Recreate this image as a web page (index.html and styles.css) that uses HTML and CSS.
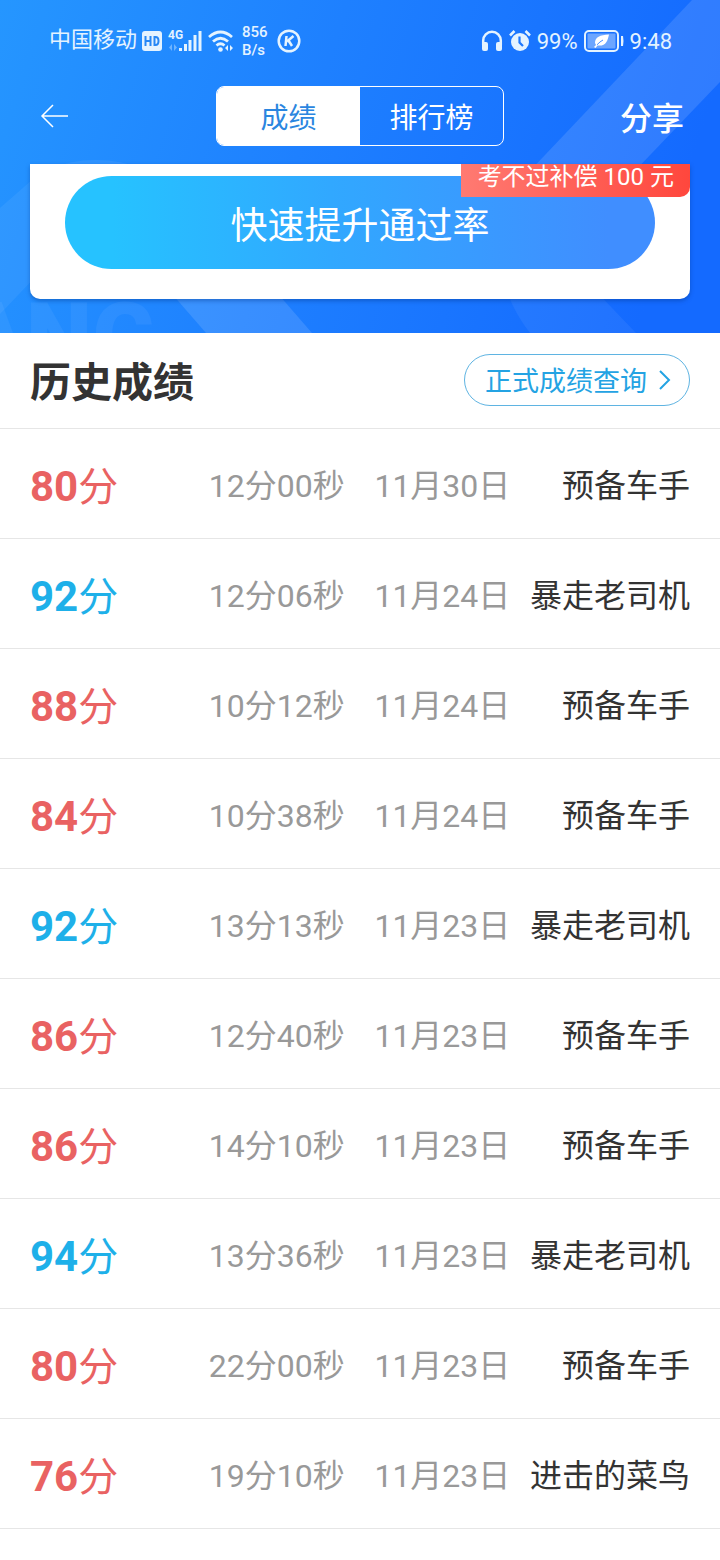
FILE: index.html
```html
<!DOCTYPE html>
<html lang="zh-CN">
<head>
<meta charset="utf-8">
<meta name="viewport" content="width=device-width, initial-scale=1">
<title>历史成绩</title>
<link rel="stylesheet" href="styles.css">
</head>
<body>
<header class="hero">
  <svg class="hero-art" viewBox="0 0 720 333" preserveAspectRatio="none" aria-hidden="true">
    <g fill="#fff">
      <path d="M692 0H720V82L540 270H436Z" opacity=".12"/>
      <path d="M0 208L40 173V272L0 314Z" opacity=".06"/>
      <ellipse cx="96" cy="190" rx="64" ry="30" opacity=".06"/>
      <path d="M146 264H252L312 333H206Z" opacity=".12"/>
      <path d="M505 285Q512 310 530 333H636L590 285Z" opacity=".06"/>
      <text class="hero-mark" x="-38" y="370" opacity=".05">ANG</text>
    </g>
  </svg>

  <div class="status">
    <div class="status-side">
      <span class="carrier">中国移动</span>
      <svg width="20" height="20" viewBox="0 0 20 20"><rect width="20" height="20" rx="3" fill="#e4f3ff"/><path d="M3.500 5v10M8.500 5v10M3.500 10h5M12.500 6v8h1c2 0 3-1.500 3-4s-1-4-3-4z" fill="none" stroke="#2687f5" stroke-width="2"/></svg>
      <span class="signal">
        <span class="net">4G</span>
        <svg width="34" height="24" viewBox="0 0 34 24" fill="#e4f3ff"><path d="M11 19h3v3h-3zM16 15h3v7h-3zM20.500 11h3v11h-3zM25.500 6h3v16h-3zM30.500 2h3v20h-3z"/><path d="M4 15v7L1 18.500zM6 22v-7l3 3.500z" opacity=".4"/></svg>
      </span>
      <svg width="26" height="24" viewBox="0 0 26 24"><g fill="none" stroke="#e4f3ff" stroke-width="2.800"><path d="M1 8Q12.500-2 24 8M5 12.500Q12.500 6 20 12.500M8.500 16.500Q12.500 13 16.500 16.500"/></g><g fill="#e4f3ff"><circle cx="12.500" cy="20.500" r="2.300"/><path d="M20 16v6l-3-3zM22 16v6l3-3z"/></g></svg>
      <span class="speed">856<br>B/s</span>
      <svg width="24" height="24" viewBox="0 0 24 24" fill="none" stroke="#e4f3ff" stroke-width="2.500"><circle cx="12" cy="12" r="10.300"/><path d="M9.500 7L8.500 17M16.500 7L10 12.500M11.500 11.500L15 17"/></svg>
    </div>
    <div class="status-side">
      <svg width="22" height="24" viewBox="0 0 22 24"><path d="M2.200 16V11.500a8.800 8.800 0 0 1 17.600 0V16" fill="none" stroke="#e4f3ff" stroke-width="2.500"/><g fill="#e4f3ff"><rect x="1" y="13" width="6" height="9" rx="2"/><rect x="15" y="13" width="6" height="9" rx="2"/></g></svg>
      <svg width="22" height="24" viewBox="0 0 22 24"><circle cx="11" cy="13" r="9" fill="#e4f3ff"/><path d="M1 6.500L5.500 2M21 6.500L16.500 2" stroke="#e4f3ff" stroke-width="2.500"/><path d="M10.500 7.500V13.500L14 17" fill="none" stroke="#1d78fd" stroke-width="2.200"/></svg>
      <span>99%</span>
      <svg width="40" height="22" viewBox="0 0 40 22"><rect x="1" y="1" width="33" height="20" rx="4" fill="none" stroke="#e4f3ff" stroke-width="2"/><rect x="3.500" y="3.500" width="28" height="15" rx="1" fill="#6ca6ff"/><path d="M37 6h2q1 5 0 10h-2z" fill="#e4f3ff"/><path d="M25 4.500C16 5 11 7 11 13l1 2-2 2 1.500 1 2-2.500C22 16.500 23.500 11 25 4.500Z" fill="#fff"/><path d="M13 14.800Q16 11.500 19 10" stroke="#4a8eff" fill="none"/></svg>
      <span>9:48</span>
    </div>
  </div>

  <nav class="topbar">
    <button class="back" aria-label="返回"><svg width="28" height="24" viewBox="0 0 28 24" fill="none" stroke="#fff" stroke-width="1.500"><path d="M13 1L2 12L13 23M2 12H28"/></svg></button>
    <div class="tabs">
      <button class="tab tab-on">成绩</button>
      <button class="tab">排行榜</button>
    </div>
    <button class="share">分享</button>
  </nav>

  <section class="card">
    <button class="boost">快速提升通过率</button>
    <span class="ribbon">考不过补偿 100 元</span>
  </section>
</header>

<main>
  <div class="list-head">
    <h2>历史成绩</h2>
    <a class="query" href="#">正式成绩查询<svg width="12" height="20" viewBox="0 0 12 20" fill="none" stroke="currentColor" stroke-width="2"><path d="M1 1L10 10L1 19"/></svg></a>
  </div>
  <table class="scores">
    <tbody>
      <tr><td class="score"><b>80</b>分</td><td class="time">12分00秒</td><td class="date">11月30日</td><td class="rank">预备车手</td></tr>
      <tr><td class="score pass"><b>92</b>分</td><td class="time">12分06秒</td><td class="date">11月24日</td><td class="rank">暴走老司机</td></tr>
      <tr><td class="score"><b>88</b>分</td><td class="time">10分12秒</td><td class="date">11月24日</td><td class="rank">预备车手</td></tr>
      <tr><td class="score"><b>84</b>分</td><td class="time">10分38秒</td><td class="date">11月24日</td><td class="rank">预备车手</td></tr>
      <tr><td class="score pass"><b>92</b>分</td><td class="time">13分13秒</td><td class="date">11月23日</td><td class="rank">暴走老司机</td></tr>
      <tr><td class="score"><b>86</b>分</td><td class="time">12分40秒</td><td class="date">11月23日</td><td class="rank">预备车手</td></tr>
      <tr><td class="score"><b>86</b>分</td><td class="time">14分10秒</td><td class="date">11月23日</td><td class="rank">预备车手</td></tr>
      <tr><td class="score pass"><b>94</b>分</td><td class="time">13分36秒</td><td class="date">11月23日</td><td class="rank">暴走老司机</td></tr>
      <tr><td class="score"><b>80</b>分</td><td class="time">22分00秒</td><td class="date">11月23日</td><td class="rank">预备车手</td></tr>
      <tr><td class="score"><b>76</b>分</td><td class="time">19分10秒</td><td class="date">11月23日</td><td class="rank">进击的菜鸟</td></tr>
    </tbody>
  </table>
</main>
</body>
</html>
```
FILE: styles.css
```css
* {
  box-sizing: border-box;
}

body {
  margin: 0;
  background: #fff;
  color: #333;
  font-family: Roboto, "Noto Sans CJK SC", sans-serif;
}

button {
  padding: 0;
  border: 0;
  background: none;
  color: inherit;
  font: inherit;
}

svg {
  display: block;
  flex: none;
}

.hero {
  position: relative;
  padding-bottom: 34px;
  overflow: hidden;
  background: linear-gradient(108deg, #2596ff 0%, #1e80ff 42%, #146aff 90%);
  color: #fff;
}

.hero-art {
  position: absolute;
  inset: 0;
  width: 100%;
  height: 100%;
}

.hero-mark {
  font-size: 94px;
  font-weight: 900;
}

.status,
.topbar,
.card {
  position: relative;
}

.status {
  display: flex;
  justify-content: space-between;
  height: 82px;
  padding: 0 48px 0 49px;
  color: #e4f3ff;
  font-size: 22px;
}

.status-side {
  display: flex;
  align-items: center;
  gap: 6px;
}

.carrier {
  margin-right: -1px;
  line-height: 24px;
  padding-bottom: 2px;
}

.signal {
  position: relative;
}

.net {
  position: absolute;
  top: 0;
  left: 0;
  font-family: "Liberation Sans Narrow", Roboto, sans-serif;
  font-size: 12px;
  font-weight: 700;
  line-height: 12px;
}

.speed {
  padding: 0 3px 0 2px;
  font-size: 15px;
  font-weight: 500;
  line-height: 18px;
}

.topbar {
  display: grid;
  grid-template-columns: 1fr 288px 1fr;
  align-items: center;
  height: 82px;
  padding: 0 36px 14px;
}

.back {
  justify-self: start;
  padding-left: 4px;
}

.tabs {
  display: grid;
  grid-template-columns: 1fr 1fr;
  height: 60px;
  overflow: hidden;
  border: 1px solid #fff;
  border-radius: 8px;
  font-size: 28px;
}

.tab-on {
  background: #fff;
  color: #2b86e0;
}

.share {
  justify-self: end;
  font-size: 32px;
  font-weight: 500;
}

.card {
  margin: 0 30px;
  padding: 12px 35px 30px;
  overflow: hidden;
  border-radius: 0 0 10px 10px;
  background: #fff;
  box-shadow: 0 2px 4px rgba(0, 50, 130, 0.4);
}

.boost {
  display: block;
  width: 100%;
  height: 93px;
  border-radius: 47px;
  background: linear-gradient(90deg, #26c2ff 8%, #31a8ff 45%, #408eff 92%);
  font-size: 37px;
}

.ribbon {
  position: absolute;
  top: -8px;
  right: 0;
  padding: 1px 16px 0 17px;
  border-radius: 0 0 10px;
  background: linear-gradient(90deg, #ff7a72, #ff473d);
  font-size: 24px;
  line-height: 40px;
}

.list-head {
  display: flex;
  align-items: center;
  justify-content: space-between;
  height: 96px;
  padding: 0 30px 2px;
  border-bottom: 1px solid #e6e6e6;
}

h2 {
  margin: 0;
  padding-top: 6px;
  font-size: 41px;
  line-height: 52px;
}

.query {
  display: flex;
  align-items: center;
  gap: 12px;
  height: 52px;
  padding: 0 18px 0 20px;
  border: 1px solid #5fb4e2;
  border-radius: 26px;
  color: #24a3e3;
  font-size: 27px;
  text-decoration: none;
}

.scores {
  width: 100%;
  border-spacing: 0;
  font-size: 32px;
  line-height: 40px;
  white-space: nowrap;
}

.scores td {
  height: 110px;
  padding: 4px 0 0;
  border-bottom: 1px solid #e6e6e6;
}

.scores .score {
  width: 29%;
  padding: 8px 0 0 30px;
  color: #e96262;
  font-size: 40px;
}

.score b {
  font-size: 42px;
}

.scores .pass {
  color: #1eb0e9;
}

.time {
  width: 23%;
  color: #999;
}

.date {
  color: #999;
}

.scores .rank {
  padding-right: 30px;
  text-align: right;
}
```
